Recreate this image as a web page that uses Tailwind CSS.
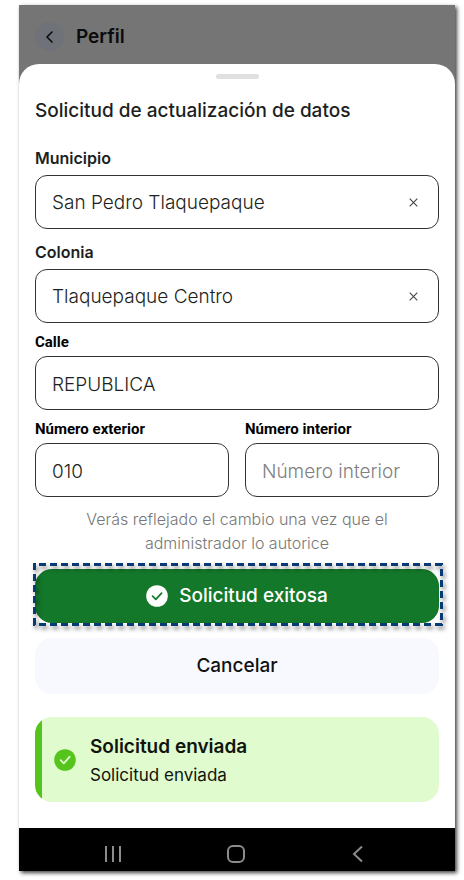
<!DOCTYPE html>
<html lang="es">
<head>
<meta charset="utf-8">
<meta name="viewport" content="width=device-width, initial-scale=1">
<title>Perfil</title>
<script src="https://cdn.jsdelivr.net/npm/@tailwindcss/browser@4"></script>
</head>
<body class="bg-white pt-[5px] pr-[9px] pb-[9px] pl-[19px] font-['Inter','Roboto',sans-serif] text-[#1d1f22]">
<div class="bg-[#757575] shadow-[2px_2px_4px_rgba(0,0,0,0.75)]">
  <header class="flex h-[59px] items-center gap-3 px-4 pt-1">
    <button type="button" aria-label="Volver" class="flex size-[29px] items-center justify-center rounded-full bg-[#70727a]">
      <svg class="size-4" viewBox="0 0 16 16" fill="none" stroke="#0b0b0d" stroke-width="1.6" stroke-linecap="round" stroke-linejoin="round"><path d="M10 3 5 8l5 5"/></svg>
    </button>
    <h1 class="text-[19px] leading-6 font-semibold text-[#0b0b0c]">Perfil</h1>
  </header>

  <main class="rounded-t-[20px] bg-white px-4 pt-[10px] pb-[26px]">
    <div class="mx-auto h-[5px] w-[43px] rounded-full bg-[#e0e0e0]"></div>
    <form>
      <h2 class="mt-5 text-[19px] leading-6 font-medium">Solicitud de actualización de datos</h2>

      <label for="municipio" class="mt-[25px] block text-[16px] leading-5 font-semibold">Municipio</label>
      <div class="mt-[7px] flex h-[54px] items-center rounded-xl border border-[#333] pt-[2px] pr-[17px] pl-4">
        <input id="municipio" type="text" value="San Pedro Tlaquepaque" class="min-w-0 flex-1 text-[19px] leading-6 font-light outline-none">
        <button type="button" aria-label="Borrar municipio" class="flex size-4 items-center justify-center pb-[2px]">
          <svg class="size-[9px]" viewBox="0 0 9 9" stroke="#444" stroke-width="1.1"><path d="M.7.7l7.6 7.6M8.3.7L.7 8.3"/></svg>
        </button>
      </div>

      <label for="colonia" class="mt-[13px] block text-[16px] leading-5 font-semibold">Colonia</label>
      <div class="mt-[7px] flex h-[54px] items-center rounded-xl border border-[#333] pt-[2px] pr-[17px] pl-4">
        <input id="colonia" type="text" value="Tlaquepaque Centro" class="min-w-0 flex-1 text-[19px] leading-6 font-light outline-none">
        <button type="button" aria-label="Borrar colonia" class="flex size-4 items-center justify-center pb-[2px]">
          <svg class="size-[9px]" viewBox="0 0 9 9" stroke="#444" stroke-width="1.1"><path d="M.7.7l7.6 7.6M8.3.7L.7 8.3"/></svg>
        </button>
      </div>

      <label for="calle" class="mt-[9px] block font-['Roboto',sans-serif] text-[15px] leading-5 font-bold text-black">Calle</label>
      <input id="calle" type="text" value="REPUBLICA" class="mt-1 block h-[54px] w-full rounded-xl border border-[#333] px-4 pt-[2px] text-[19px] font-light outline-none">

      <div class="mt-[9px] grid grid-cols-2 gap-4">
        <div>
          <label for="exterior" class="block font-['Roboto',sans-serif] text-[15px] leading-5 font-bold text-black">Número exterior</label>
          <input id="exterior" type="text" value="010" class="mt-1 block h-[54px] w-full rounded-xl border border-[#333] px-4 pt-[2px] text-[19px] font-light outline-none">
        </div>
        <div>
          <label for="interior" class="block font-['Roboto',sans-serif] text-[15px] leading-5 font-bold text-black">Número interior</label>
          <input id="interior" type="text" placeholder="Número interior" class="mt-1 block h-[54px] w-full rounded-xl border border-[#333] px-4 pt-[2px] text-[19px] font-light outline-none placeholder:text-[#808080]">
        </div>
      </div>

      <p class="mx-auto mt-[10px] max-w-[320px] text-center text-[16px] leading-6 font-light text-[#777]">Verás reflejado el cambio una vez que el administrador lo autorice</p>

      <div class="relative mt-[14px]">
        <button type="submit" class="flex h-[54px] w-full items-center justify-center gap-[11px] rounded-[17px] bg-[#13782a] text-[19px] font-medium text-white">
          <svg class="size-[22px]" viewBox="0 0 22 22" fill="none"><circle cx="11" cy="11" r="10.8" fill="#fff"/><path d="M6.6 11.2l3.2 3.2 5.8-6.2" stroke="#13782a" stroke-width="1.7" stroke-linecap="round" stroke-linejoin="round"/></svg>
          Solicitud exitosa
        </button>
        <div class="pointer-events-none absolute -top-[6px] -right-[4px] -bottom-[3px] -left-[2px] drop-shadow-[2px_3px_2px_rgba(0,0,0,0.5)]">
          <svg class="size-full overflow-hidden" stroke="#083a75" stroke-width="6" stroke-dasharray="7 4">
            <line x1="0" y1="0" x2="100%" y2="0" stroke-dashoffset="5"/>
            <line x1="0" y1="100%" x2="100%" y2="100%" stroke-dashoffset="5"/>
            <line x1="0" y1="0" x2="0" y2="100%"/>
            <line x1="100%" y1="0" x2="100%" y2="100%" stroke-dashoffset="5"/>
          </svg>
        </div>
      </div>

      <button type="button" class="mt-[15px] h-14 w-full rounded-[17px] bg-[#f8f9fe] text-[19px] font-medium text-[#111]">Cancelar</button>
    </form>

    <div role="status" class="mt-[23px] flex h-[85px] items-center overflow-hidden rounded-[17px] bg-[#e0fbcd] text-[#10140e]">
      <div class="w-[7px] self-stretch bg-[#55c41c]"></div>
      <svg class="ml-3 size-[22px]" viewBox="0 0 22 22" fill="none"><circle cx="11" cy="11" r="10.8" fill="#55c41c"/><path d="M6.600 11.200l3.200 3.200 5.800-6.600" stroke="#e0fbcd" stroke-width="1.800" stroke-linecap="round" stroke-linejoin="round"/></svg>
      <div class="ml-[14px] pt-[2px]">
        <p class="text-[19px] leading-7 font-semibold">Solicitud enviada</p>
        <p class="text-[17px] leading-7">Solicitud enviada</p>
      </div>
    </div>
  </main>

  <nav aria-label="Sistema" class="flex h-[43px] items-center justify-between bg-black pt-2 pr-[88px] pl-[85px]">
    <button type="button" aria-label="Recientes"><svg class="size-[18px]" viewBox="0 0 18 18" stroke="#8c8c8c" stroke-width="2"><path d="M2 1v16M9 1v16M16 1v16"/></svg></button>
    <button type="button" aria-label="Inicio"><svg class="size-[18px]" viewBox="0 0 18 18" fill="none" stroke="#8c8c8c" stroke-width="2"><rect x="1" y="1" width="16" height="16" rx="5"/></svg></button>
    <button type="button" aria-label="Atrás"><svg class="size-[18px]" viewBox="0 0 18 18" fill="none" stroke="#8c8c8c" stroke-width="2"><path d="M13 1.500 5 9l8 7.500"/></svg></button>
  </nav>
</div>
</body>
</html>
